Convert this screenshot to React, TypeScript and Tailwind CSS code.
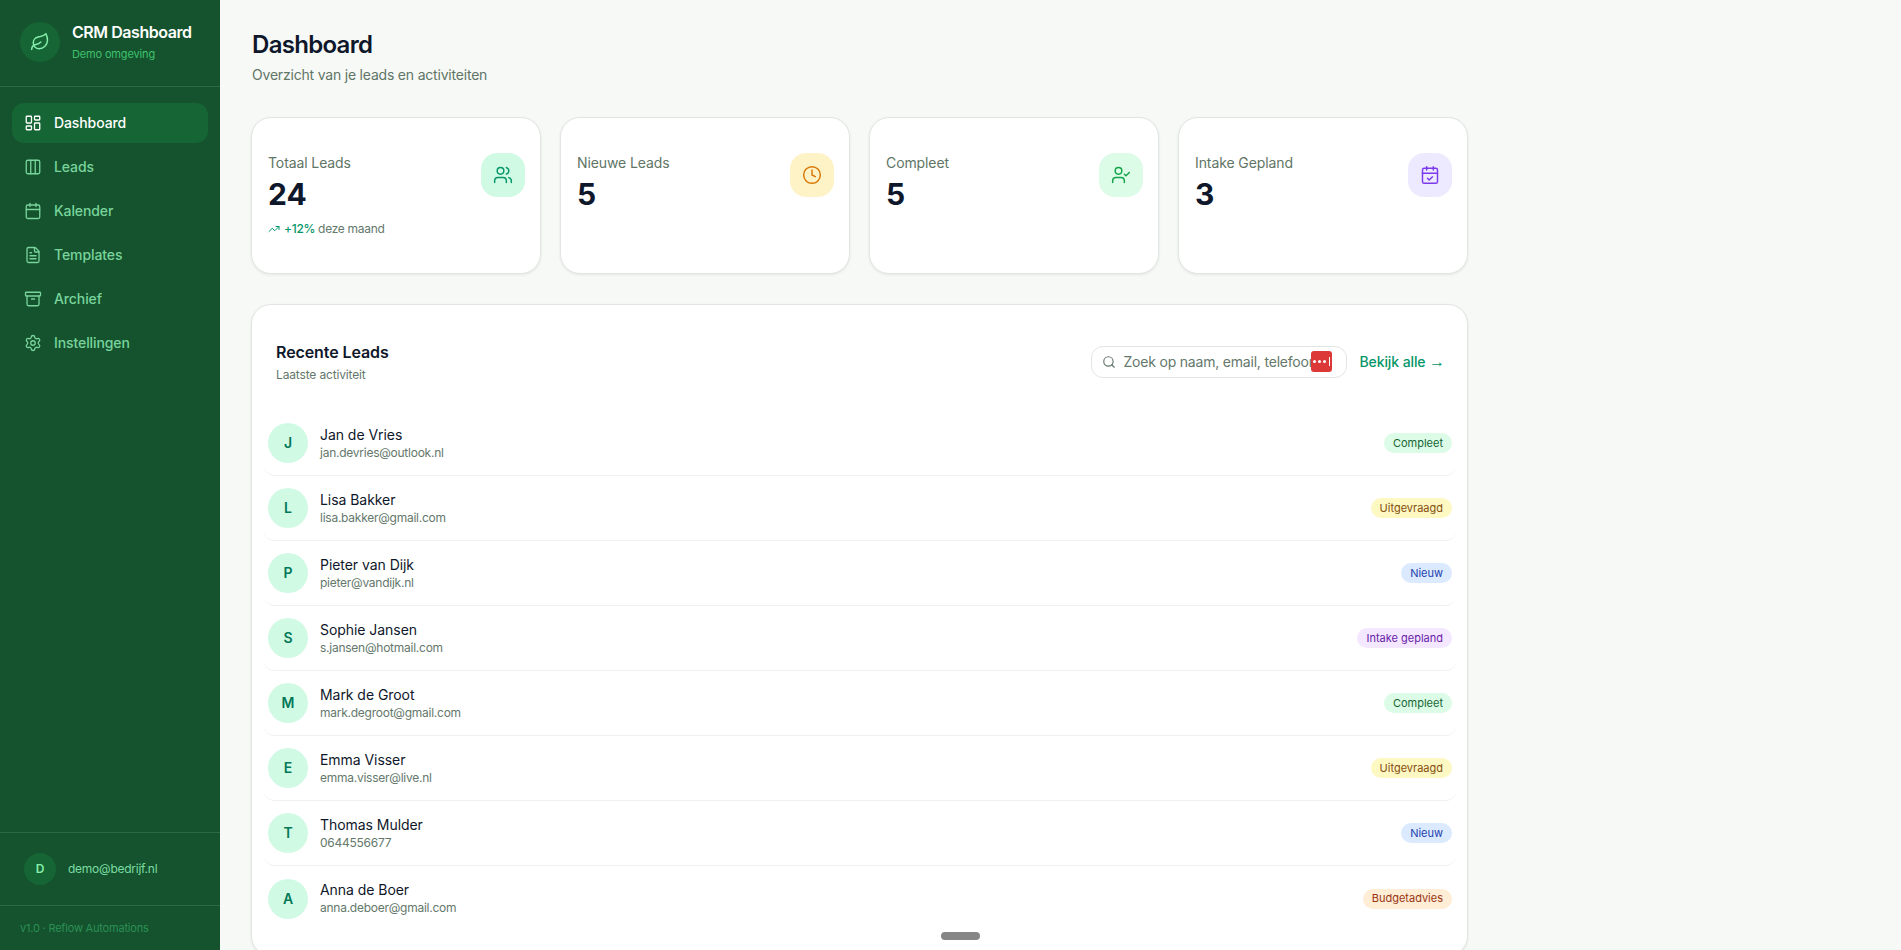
import {
  Archive,
  CalendarCheck,
  Calendar,
  Clock,
  Columns3,
  FileText,
  LayoutDashboard,
  Leaf,
  Search,
  Settings,
  TrendingUp,
  UserCheck,
  Users,
} from 'lucide-react';

const navItems = [
  { label: 'Dashboard', icon: LayoutDashboard, active: true },
  { label: 'Leads', icon: Columns3 },
  { label: 'Kalender', icon: Calendar },
  { label: 'Templates', icon: FileText },
  { label: 'Archief', icon: Archive },
  { label: 'Instellingen', icon: Settings },
];

const stats = [
  { label: 'Totaal Leads', value: '24', icon: Users, box: 'bg-[#d1fae5]', color: 'text-[#059669]', trend: true },
  { label: 'Nieuwe Leads', value: '5', icon: Clock, box: 'bg-[#fef3c7]', color: 'text-[#d97706]' },
  { label: 'Compleet', value: '5', icon: UserCheck, box: 'bg-[#dcfce7]', color: 'text-[#16a34a]' },
  { label: 'Intake Gepland', value: '3', icon: CalendarCheck, box: 'bg-[#ede9fe]', color: 'text-[#7c3aed]' },
];

const badgeStyles: Record<string, string> = {
  Compleet: 'bg-[#dcfce7] text-[#166534]',
  Uitgevraagd: 'bg-[#fef9c3] text-[#854d0e]',
  Nieuw: 'bg-[#dbeafe] text-[#1e40af]',
  'Intake gepland': 'bg-[#f3e8ff] text-[#6b21a8]',
  Budgetadvies: 'bg-[#ffedd5] text-[#9a3412]',
};

const leads = [
  { name: 'Jan de Vries', sub: 'jan.devries@outlook.nl', status: 'Compleet' },
  { name: 'Lisa Bakker', sub: 'lisa.bakker@gmail.com', status: 'Uitgevraagd' },
  { name: 'Pieter van Dijk', sub: 'pieter@vandijk.nl', status: 'Nieuw' },
  { name: 'Sophie Jansen', sub: 's.jansen@hotmail.com', status: 'Intake gepland' },
  { name: 'Mark de Groot', sub: 'mark.degroot@gmail.com', status: 'Compleet' },
  { name: 'Emma Visser', sub: 'emma.visser@live.nl', status: 'Uitgevraagd' },
  { name: 'Thomas Mulder', sub: '0644556677', status: 'Nieuw' },
  { name: 'Anna de Boer', sub: 'anna.deboer@gmail.com', status: 'Budgetadvies' },
];

function Sidebar() {
  return (
    <aside className="w-[220px] shrink-0 h-full bg-[#14532d] flex flex-col">
      <div className="h-[87px] shrink-0 flex items-center gap-3 px-5 pb-[3px] border-b border-[#2a6b45]">
        <div className="w-10 h-10 rounded-full bg-[#166534] flex items-center justify-center">
          <Leaf className="w-5 h-5 text-[#86efac]" strokeWidth={1.75} />
        </div>
        <div>
          <div className="text-base leading-[22px] font-semibold text-white tracking-[-0.45px]">CRM Dashboard</div>
          <div className="text-[11px] leading-4 mt-[3px] text-[#4ade80] opacity-80 tracking-[-0.15px]">Demo omgeving</div>
        </div>
      </div>
      <nav className="flex-1 px-3 pt-4 flex flex-col gap-1">
        {navItems.map((item) => (
          <div
            key={item.label}
            className={`h-10 rounded-xl px-3 flex items-center gap-3 text-sm font-medium tracking-[-0.1px] ${
              item.active ? 'bg-[#166534] text-white' : 'text-[#79d39c]'
            }`}
          >
            <item.icon className="w-[18px] h-[18px] shrink-0" strokeWidth={1.75} />
            <span>{item.label}</span>
          </div>
        ))}
      </nav>
      <div className="h-[73px] shrink-0 border-t border-[#2a6b45] flex items-center gap-3 px-6">
        <div className="w-8 h-8 rounded-full bg-[#166534] flex items-center justify-center text-xs font-semibold text-[#86efac]">
          D
        </div>
        <span className="text-xs text-[#7bdca3] tracking-[-0.25px]">demo@bedrijf.nl</span>
      </div>
      <div className="h-[45px] shrink-0 border-t border-[#2a6b45] px-5 flex items-center text-[11px] text-[#2c8f56] tracking-[-0.2px]">
        v1.0 · Reflow Automations
      </div>
    </aside>
  );
}

function StatCard({ stat }: { stat: (typeof stats)[number] }) {
  return (
    <div className="h-[157px] bg-white rounded-[20px] border border-[#e2e6e2] shadow-[0_1px_3px_rgba(0,0,0,0.08)] pl-4 pr-[15px] pt-[34px] flex justify-between items-start">
      <div>
        <p className="text-sm leading-5 text-[#5f7566] mt-px tracking-[-0.1px]">{stat.label}</p>
        <p className="text-[30px] leading-9 font-bold text-[#0f172a] mt-[3px]">{stat.value}</p>
        {stat.trend && (
          <p className="flex items-center gap-[3px] mt-[9px] text-xs leading-4 text-[#64786c] tracking-[-0.3px]">
            <TrendingUp className="w-3 h-3 mr-px text-[#059669]" />
            <span className="text-[#059669] font-medium">+12%</span>
            <span>deze maand</span>
          </p>
        )}
      </div>
      <div className={`w-11 h-11 mt-px rounded-2xl flex items-center justify-center ${stat.box}`}>
        <stat.icon className={`w-5 h-5 ${stat.color}`} strokeWidth={1.75} />
      </div>
    </div>
  );
}

function LeadRow({ lead }: { lead: (typeof leads)[number] }) {
  return (
    <div className="h-[65px] shrink-0 px-[5px] flex items-center gap-3 border-b last:border-b-0 border-[#eef1ee] rounded-xl">
      <div className="w-10 h-10 rounded-full bg-[#d1fae5] flex items-center justify-center text-sm font-semibold text-[#047857]">
        {lead.name[0]}
      </div>
      <div className="flex-1 min-w-0">
        <p className="text-sm leading-[18px] text-[#0f172a] tracking-[-0.05px]">{lead.name}</p>
        <p className="text-xs leading-4 mt-px text-[#64786c] tracking-[-0.25px]">{lead.sub}</p>
      </div>
      <span className={`h-5 px-[9px] rounded-full flex items-center text-[11px] ${badgeStyles[lead.status]}`}>
        {lead.status}
      </span>
    </div>
  );
}

export default function App() {
  return (
    <div className="relative h-screen overflow-hidden flex bg-[#f7f9f7] font-['Inter',sans-serif]">
      <Sidebar />
      <main className="flex-1 min-w-0">
        <div className="max-w-7xl pl-[31px] pr-8 pt-[29px]">
          <h1 className="text-2xl leading-8 pl-px font-semibold text-[#0f172a] tracking-[-0.7px]">Dashboard</h1>
          <p className="text-sm leading-5 pl-px mt-1 text-[#5f7566] tracking-[-0.2px]">Overzicht van je leads en activiteiten</p>

          <div className="grid grid-cols-4 gap-[19px] mt-8">
            {stats.map((s) => (
              <StatCard key={s.label} stat={s} />
            ))}
          </div>

          <section className="mt-[30px] bg-white rounded-[20px] border border-[#e2e6e2] shadow-[0_1px_3px_rgba(0,0,0,0.08)] pl-[11px] pr-[10px] pb-6">
            <div className="h-[106px] pl-[13px] pr-3 flex items-center justify-between">
              <div className="pt-[7px]">
                <h2 className="text-base leading-6 font-semibold text-[#0f172a] tracking-[-0.1px]">Recente Leads</h2>
                <p className="text-xs leading-4 mt-[3px] text-[#64786c] tracking-[-0.15px]">Laatste activiteit</p>
              </div>
              <div className="flex items-center gap-3 mt-2">
                <div className="relative w-[256px] h-8 rounded-xl border border-[#e2e6e2] bg-white flex items-center pl-[10px] pr-[35px] gap-[7px] overflow-hidden">
                  <Search className="w-[14px] h-[14px] shrink-0 text-[#64786c]" />
                  <input
                    className="flex-1 min-w-0 text-sm tracking-[-0.2px] outline-none bg-transparent placeholder:text-[#64786c]"
                    placeholder="Zoek op naam, email, telefoon..."
                  />
                  <div className="absolute left-[219px] top-1 w-[21px] h-[21px] rounded-[3px] bg-[#dc3838] flex items-center justify-center gap-[2px]">
                    <span className="w-[3px] h-[3px] rounded-full bg-white" />
                    <span className="w-[3px] h-[3px] rounded-full bg-white" />
                    <span className="w-[3px] h-[3px] rounded-full bg-white" />
                    <span className="w-px h-[9px] bg-white ml-px" />
                  </div>
                </div>
                <span className="text-sm font-medium text-[#059669] tracking-[-0.1px]">
                  Bekijk alle <span className="font-['Liberation_Sans',sans-serif] font-normal text-base">→</span>
                </span>
              </div>
            </div>
            <div className="flex flex-col">
              {leads.map((l) => (
                <LeadRow key={l.name} lead={l} />
              ))}
            </div>
          </section>
        </div>
      </main>
      <div className="absolute left-[941px] top-[932px] w-[39px] h-2 rounded-full bg-[#868686]" />
    </div>
  );
}
